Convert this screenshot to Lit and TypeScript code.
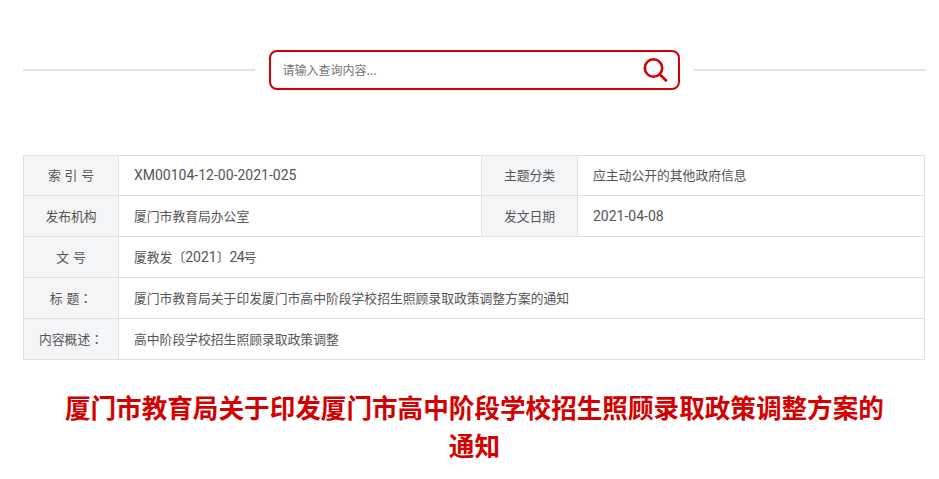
import { LitElement, html, css } from "lit";
import { customElement } from "lit/decorators.js";

@customElement("app-root")
export class AppRoot extends LitElement {
  static styles = css`
    :host {
      display: block;
      width: 939px;
      height: 479px;
      overflow: hidden;
      background: #fff;
      font-family: "Noto Sans CJK SC", "Liberation Sans", sans-serif;
      color: #555;
    }
    .page { padding: 50px 14px 0 23px; }
    .search-row { display: flex; align-items: center; height: 40px; }
    .rule { flex: 1; height: 2px; background: #e2e2e2; }
    .search {
      box-sizing: border-box;
      width: 411px;
      height: 40px;
      margin: 0 14px;
      border: 2px solid #d40000;
      border-radius: 8px;
      display: flex;
      align-items: center;
      justify-content: space-between;
      padding: 0 10px 2px 12px;
      font-size: 12px;
      color: #757575;
    }
    .search svg { display: block; margin-top: 2px; }
    table {
      margin-top: 65px;
      width: 902px;
      border-collapse: collapse;
      table-layout: fixed;
      font-size: 12.8px;
    }
    td {
      border: 1px solid #e0e0e0;
      height: 41px;
      padding: 0 0 2px 15px;
      box-sizing: border-box;
    }
    tr.first td { height: 40px; }
    td.l {
      background: #f4f5f7;
      text-align: center;
      padding: 0 0 2px 0;
      word-spacing: 1px;
    }
    .n { font-family: Roboto, "Liberation Sans", sans-serif; font-size: 14px; }
    .t { letter-spacing: -0.7px; }
    .p { font-family: "Noto Sans CJK TC", sans-serif; }
    h1 {
      margin: 28px 0 0 0;
      font-size: 25.6px;
      line-height: 38px;
      font-weight: 700;
      color: #d40000;
      text-align: center;
      padding: 0 29.6px 0 30.4px;
    }
  `;

  render() {
    return html`
      <div class="page">
        <div class="search-row">
          <div class="rule"></div>
          <div class="search">
            <span>请输入查询内容...</span>
            <svg width="26" height="26" viewBox="0 0 26 26" fill="none" stroke="#d40000" stroke-width="2.6" stroke-linecap="round">
              <circle cx="11.5" cy="11" r="8.7"></circle>
              <path d="M18 17.5L24 23.5"></path>
            </svg>
          </div>
          <div class="rule"></div>
        </div>
        <table>
          <colgroup>
            <col style="width:95px" /><col style="width:363px" /><col style="width:96px" /><col />
          </colgroup>
          <tr class="first">
            <td class="l">索 引 号</td><td><span class="n">XM00104-12-00-2021-025</span></td>
            <td class="l">主题分类</td><td>应主动公开的其他政府信息</td>
          </tr>
          <tr>
            <td class="l">发布机构</td><td>厦门市教育局办公室</td>
            <td class="l">发文日期</td><td><span class="n">2021-04-08</span></td>
          </tr>
          <tr><td class="l">文 号</td><td colspan="3">厦教发〔<span class="n">2021</span>〕<span class="n t">24</span>号</td></tr>
          <tr><td class="l">标 题<span class="p">：</span></td><td colspan="3">厦门市教育局关于印发厦门市高中阶段学校招生照顾录取政策调整方案的通知</td></tr>
          <tr><td class="l">内容概述<span class="p">：</span></td><td colspan="3">高中阶段学校招生照顾录取政策调整</td></tr>
        </table>
        <h1>厦门市教育局关于印发厦门市高中阶段学校招生照顾录取政策调整方案的通知</h1>
      </div>
    `;
  }
}
